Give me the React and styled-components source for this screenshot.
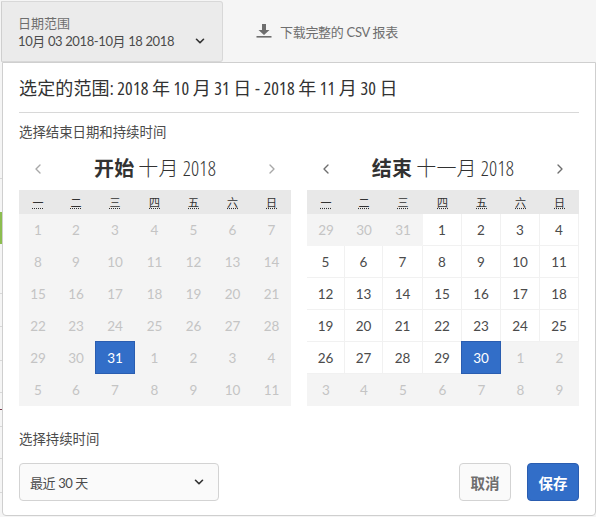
import React from "react";
import styled, { createGlobalStyle } from "styled-components";
import { ChevronLeft, ChevronRight, ChevronDown } from "lucide-react";

const GlobalStyle = createGlobalStyle`
  html, body {
    margin: 0;
    padding: 0;
    background: #f5f5f5;
  }
  * {
    box-sizing: border-box;
  }
`;

const CONDENSED = `"Open Sans", "Noto Sans CJK SC", sans-serif`;

const Page = styled.div`
  width: 596px;
  height: 517px;
  overflow: hidden;
  background: #f5f5f5;
  font-family: Lato, "Noto Sans CJK SC", sans-serif;
  color: #4b4b4b;
`;

const TopBar = styled.div`
  display: flex;
  align-items: center;
  height: 62px;
`;

const RangeButton = styled.div`
  width: 222px;
  height: 61px;
  margin: 1px 0 0 1px;
  padding: 13px 15px 0 16px;
  background: #ebebeb;
  border: 1px solid #d8d8d8;
  border-left-color: #cfcfcf;
  border-radius: 0 3px 3px 0;
`;

const RangeLabel = styled.div`
  font-size: 13px;
  line-height: 16px;
  color: #6e6e6e;
`;

const RangeValue = styled.div`
  display: flex;
  justify-content: space-between;
  align-items: center;
  font-size: 13px;
  line-height: 20px;
  letter-spacing: -0.38px;
  color: #4b4b4b;
`;

const Download = styled.div`
  display: flex;
  align-items: center;
  gap: 8px;
  margin-left: 33px;
  font-size: 13px;
  letter-spacing: -0.3px;
  color: #6e6e6e;
`;

const Body = styled.div`
  display: flex;
`;

const Strip = styled.div`
  width: 2px;
  flex: none;
`;

const Tick = styled.div`
  height: ${(p) => p.$h}px;
  margin-top: ${(p) => p.$gap}px;
  background: ${(p) => p.$color};
`;

const Popup = styled.div`
  width: 594px;
  height: 454px;
  padding: 0 16px;
  background: #fff;
  border: 1px solid #cfcfcf;
  border-radius: 0 0 4px 4px;
`;

const Title = styled.div`
  height: 50px;
  padding-top: 13px;
  border-bottom: 1px solid #d8d8d8;
  font-family: ${CONDENSED};
  font-stretch: 75%;
  font-size: 18px;
  line-height: 24px;
  letter-spacing: 0.14px;
  color: #323232;
`;

const Hint = styled.div`
  margin-top: ${(p) => p.$top}px;
  font-size: 13.4px;
  line-height: 18px;
  color: #4b4b4b;
`;

const Calendars = styled.div`
  display: flex;
  gap: 16px;
  margin-top: 11px;
`;

const Calendar = styled.div`
  width: 272px;
`;

const CalHeader = styled.div`
  display: flex;
  align-items: center;
  justify-content: space-between;
  height: 34px;
  margin-bottom: 4px;
  padding: 0 11px;
  color: ${(p) => p.$arrow};
`;

const CalTitle = styled.div`
  font-family: ${CONDENSED};
  font-stretch: 75%;
  font-size: 20px;
  font-weight: 300;
  line-height: 26px;
  letter-spacing: 0.2px;
  color: #323232;
  b {
    font-weight: 700;
  }
`;

const Grid = styled.div`
  display: grid;
  grid-template-columns: 38px 38px 40px 39px 39px 39px 39px;
  grid-template-rows: 24px repeat(6, 32px);
  background: #f4f4f4;
  border-radius: 3px;
`;

const WeekDay = styled.div`
  display: flex;
  align-items: center;
  justify-content: center;
  background: #e8e8e8;
  font-size: 11px;
  color: #323232;
  abbr {
    text-decoration: underline dotted;
    text-underline-offset: 1px;
  }
`;

const Day = styled.div`
  display: flex;
  align-items: center;
  justify-content: center;
  font-size: 13.5px;
  color: ${(p) => (p.$selected ? "#fff" : p.$active ? "#4b4b4b" : "#c4c4c4")};
  background: ${(p) => (p.$selected ? "#326ec8" : p.$active ? "#fff" : "#f4f4f4")};
  border-style: solid;
  border-color: ${(p) => (p.$selected ? "#2a5db0" : "#f1f1f1")};
  border-width: ${(p) => (p.$selected ? "1px" : p.$active ? "0 1px 1px 0" : "0")};
  margin-top: ${(p) => (p.$selected ? "-1px" : "0")};
  margin-left: ${(p) => (p.$bleed ? "-1px" : "0")};
`;

const Footer = styled.div`
  display: flex;
  justify-content: space-between;
  align-items: center;
  margin-top: 15px;
`;

const Select = styled.div`
  display: flex;
  align-items: center;
  justify-content: space-between;
  width: 200px;
  height: 38px;
  padding: 0 12px 0 10px;
  background: #fafafa;
  border: 1px solid #d3d3d3;
  border-radius: 4px;
  font-size: 13px;
  letter-spacing: -0.4px;
  color: #4b4b4b;
`;

const Actions = styled.div`
  display: flex;
  gap: 16px;
`;

const Button = styled.div`
  display: flex;
  align-items: center;
  justify-content: center;
  width: 52px;
  height: 38px;
  border-radius: 4px;
  font-size: 14.5px;
  font-weight: 700;
  background: ${(p) => (p.$primary ? "#326ec8" : "#fafafa")};
  color: ${(p) => (p.$primary ? "#fff" : "#6e6e6e")};
  border: 1px solid ${(p) => (p.$primary ? "#2a5db0" : "#d3d3d3")};
`;

const WEEK = ["一", "二", "三", "四", "五", "六", "日"];

const TICKS = [
  { gap: 116, h: 1, color: "#d8d8d8" },
  { gap: 33, h: 32, color: "#8cbd4f" },
  { gap: 49, h: 1, color: "#d8d8d8" },
  { gap: 32, h: 1, color: "#d8d8d8" },
  { gap: 33, h: 1, color: "#d8d8d8" },
  { gap: 31, h: 1, color: "#d8d8d8" },
  { gap: 16, h: 1, color: "#7a3a4a" },
  { gap: 16, h: 1, color: "#d8d8d8" },
  { gap: 31, h: 1, color: "#d8d8d8" },
  { gap: 33, h: 1, color: "#d8d8d8" },
];

const DownloadIcon = () => (
  <svg width="16" height="16" viewBox="0 0 16 16" fill="#6e6e6e">
    <path d="M6 1h4v6h3.5L8 12 2.5 7H6z" />
    <rect x="0.5" y="13" width="15" height="1.6" />
  </svg>
);

const makeDays = (start, prevLen, len, from, to, selected) => {
  const out = [];
  let d = start;
  let inMonth = start === 1;
  for (let i = 0; i < 42; i++) {
    const active = inMonth && d >= from && d <= to;
    out.push({ d, active, selected: inMonth && d === selected });
    d += 1;
    if (!inMonth && d > prevLen && out[0].d !== 1 && i < 7) {
      d = 1;
      inMonth = true;
    } else if (inMonth && d > len) {
      d = 1;
      inMonth = false;
    }
  }
  return out;
};

const MonthCalendar = ({ label, month, days, arrow }) => (
  <Calendar>
    <CalHeader $arrow={arrow}>
      <ChevronLeft size={16} />
      <CalTitle>
        <b>{label}</b> {month} 2018
      </CalTitle>
      <ChevronRight size={16} />
    </CalHeader>
    <Grid>
      {WEEK.map((w) => (
        <WeekDay key={w}>
          <abbr>{w}</abbr>
        </WeekDay>
      ))}
      {days.map((x, i) => (
        <Day
          key={i}
          $active={x.active}
          $selected={x.selected}
          $bleed={x.selected && i % 7 !== 2}
        >
          {x.d}
        </Day>
      ))}
    </Grid>
  </Calendar>
);

export default function App() {
  return (
    <Page>
      <GlobalStyle />
      <TopBar>
        <RangeButton>
          <RangeLabel>日期范围</RangeLabel>
          <RangeValue>
            10月 03 2018-10月 18 2018
            <ChevronDown size={14} strokeWidth={2.8} color="#323232" />
          </RangeValue>
        </RangeButton>
        <Download>
          <DownloadIcon />
          下载完整的 CSV 报表
        </Download>
      </TopBar>
      <Body>
        <Strip>
          {TICKS.map((t, i) => (
            <Tick key={i} $gap={t.gap} $h={t.h} $color={t.color} />
          ))}
        </Strip>
        <Popup>
          <Title>选定的范围: 2018 年 10 月 31 日 - 2018 年 11 月 30 日</Title>
          <Hint $top={10}>选择结束日期和持续时间</Hint>
          <Calendars>
            <MonthCalendar
              label="开始"
              month="十月"
              arrow="#a8a8a8"
              days={makeDays(1, 30, 31, 0, 0, 31)}
            />
            <MonthCalendar
              label="结束"
              month="十一月"
              arrow="#6e6e6e"
              days={makeDays(29, 31, 30, 1, 30, 30)}
            />
          </Calendars>
          <Hint $top={24}>选择持续时间</Hint>
          <Footer>
            <Select>
              最近 30 天
              <ChevronDown size={14} strokeWidth={2.8} color="#323232" />
            </Select>
            <Actions>
              <Button>取消</Button>
              <Button $primary>保存</Button>
            </Actions>
          </Footer>
        </Popup>
      </Body>
    </Page>
  );
}
